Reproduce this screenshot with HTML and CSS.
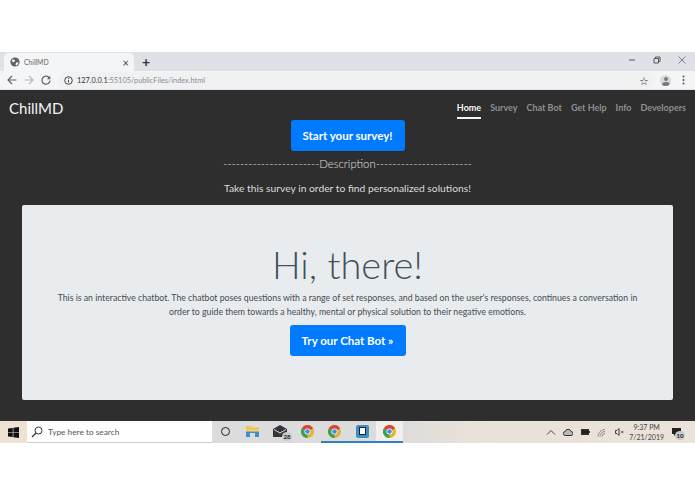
FILE: index.html
```html
<!DOCTYPE html>
<html lang="en">
<head>
<meta charset="utf-8">
<title>ChillMD</title>
<link rel="stylesheet" href="styles.css">
</head>
<body>
<svg class="defs" width="0" height="0" aria-hidden="true">
  <symbol id="chrome" viewBox="0 0 24 24">
    <circle cx="12" cy="12" r="12" fill="#e0b52e"/>
    <path d="M12 12 1.600 6A12 12 0 0 1 22.400 6Z" fill="#db4437"/>
    <path d="M12 12 1.600 6A12 12 0 0 0 12 24Z" fill="#3f9f52"/>
    <circle cx="12" cy="12" r="5.600" fill="#fff"/>
    <circle cx="12" cy="12" r="4.300" fill="#4a8af0"/>
  </symbol>
</svg>
<div class="top-gap"></div>
<div class="tabbar">
  <div class="tab">
    <svg class="globe" width="10" height="10" viewBox="0 0 10 10"><circle cx="5" cy="5" r="4.600" fill="#5f6368"/><path d="M2 2.200 5 3 4.200 5 2.600 5.200ZM6 5.400 8.600 5.600 7 8.600 5.600 8Z" fill="#fff"/></svg>
    <span class="tab-title">ChillMD</span>
    <span class="tab-close">×</span>
  </div>
  <span class="new-tab">+</span>
  <div class="window-controls">
    <svg width="8" height="8" viewBox="0 0 8 8"><path d="M1 4h6" stroke="#555" fill="none"/></svg>
    <svg width="8" height="8" viewBox="0 0 8 8"><path d="M1 2.500h4.500v4.500h-4.500zM2.500 2.500v-1.500h4.500v4.500h-1.500" stroke="#555" fill="none"/></svg>
    <svg width="8" height="8" viewBox="0 0 8 8"><path d="M.5.500l7 7M7.500.500l-7 7" stroke="#666" fill="none" stroke-width=".8"/></svg>
  </div>
</div>
<div class="toolbar">
  <svg class="tool-icon" width="10" height="10" viewBox="0 0 10 10"><path d="M9.500 5h-8M5 1 1 5l4 4" stroke="#5f6368" stroke-width="1.200" fill="none"/></svg>
  <svg class="tool-icon" width="10" height="10" viewBox="0 0 10 10"><path d="M.5 5h8M5 1l4 4-4 4" stroke="#b5b7ba" stroke-width="1.200" fill="none"/></svg>
  <svg class="tool-icon" width="10" height="10" viewBox="0 0 10 10"><path d="M8.500 3.200A4 4 0 1 0 9 5.500" stroke="#5f6368" stroke-width="1.200" fill="none"/><path d="M9.300.8v3.400H5.900z" fill="#5f6368"/></svg>
  <div class="omnibox">
    <svg width="9" height="9" viewBox="0 0 9 9"><circle cx="4.500" cy="4.500" r="3.800" stroke="#444" fill="none"/><path d="M4.500 4v2.500M4.500 2.200v1" stroke="#444"/></svg>
    <span class="url"><span class="url-host">127.0.0.1</span>:55105/publicFiles/index.html</span>
    <span class="star">☆</span>
  </div>
  <span class="avatar"><span class="avatar-head"></span><span class="avatar-body"></span></span>
  <svg width="3" height="10" viewBox="0 0 3 10"><circle cx="1.500" cy="1.500" r="1" fill="#555"/><circle cx="1.500" cy="5" r="1" fill="#555"/><circle cx="1.500" cy="8.500" r="1" fill="#555"/></svg>
</div>
<main class="page">
  <nav class="navbar">
    <a class="brand">ChillMD</a>
    <ul class="nav-links">
      <li class="nav-link active">Home</li>
      <li class="nav-link">Survey</li>
      <li class="nav-link">Chat Bot</li>
      <li class="nav-link">Get Help</li>
      <li class="nav-link">Info</li>
      <li class="nav-link">Developers</li>
    </ul>
  </nav>
  <div class="intro">
    <a class="btn btn-survey">Start your survey!</a>
    <p class="divider">-----------------------Description-----------------------</p>
    <p class="lead">Take this survey in order to find personalized solutions!</p>
  </div>
  <section class="jumbotron">
    <h1 class="hero">Hi, there!</h1>
    <p class="hero-text">This is an interactive chatbot. The chatbot poses questions with a range of set responses, and based on the user's responses, continues a conversation in order to guide them towards a healthy, mental or physical solution to their negative emotions.</p>
    <a class="btn btn-chat">Try our Chat Bot »</a>
  </section>
</main>
<footer class="taskbar">
  <div class="start"><svg width="11" height="11" viewBox="0 0 11 11"><path d="M0 1.600 4.800.9v4.300H0ZM5.400.8 11 0v5.200H5.400ZM0 5.800h4.800v4.300L0 9.400ZM5.400 5.800H11V11l-5.600-.8Z" fill="#111"/></svg></div>
  <div class="search">
    <svg width="12" height="12" viewBox="0 0 12 12"><circle cx="7.500" cy="4.500" r="3.500" stroke="#333" fill="none"/><path d="M5 7 1 11" stroke="#333" stroke-width="1.200"/></svg>
    <span>Type here to search</span>
  </div>
  <div class="task-icons">
    <span class="task-item"><span class="cortana"></span></span>
    <span class="task-item"><svg width="13" height="12" viewBox="0 0 13 12"><path d="M0 1h5l1 1.500h7V5H0Z" fill="#f2c34e"/><path d="M0 5h13v7H9V8H4v4H0Z" fill="#3d8fc9"/><path d="M0 5h13v1.500H0Z" fill="#f6d77c"/></svg></span>
    <span class="task-item"><svg width="15" height="12" viewBox="0 0 15 12"><path d="M0 4 7 0l7 4v8H0Z" fill="#33373b"/><path d="M1 4.500 7 8l6-3.500" stroke="#ddd" fill="none"/></svg><span class="count">28</span></span>
    <span class="task-item"><svg width="13" height="13"><use href="#chrome"/></svg></span>
    <span class="task-item running"><svg width="13" height="13"><use href="#chrome"/></svg></span>
    <span class="task-item running"><span class="vs-icon"><span class="vs-inner"></span></span></span>
    <span class="task-item running current"><svg width="13" height="13"><use href="#chrome"/></svg></span>
  </div>
  <div class="tray">
    <svg width="10" height="6" viewBox="0 0 10 6"><path d="M1 5.500 5 1.500l4 4" stroke="#444" fill="none"/></svg>
    <svg width="10" height="8" viewBox="0 0 10 8"><path d="M2.500 7.500a2 2 0 0 1-.3-4A3 3 0 0 1 8 3.500a2 2 0 0 1 0 4Z" stroke="#333" fill="#bbb"/></svg>
    <svg width="9" height="6" viewBox="0 0 9 6"><rect x=".5" y=".5" width="7" height="5" fill="#222" stroke="#333"/><path d="M8.500 2v2" stroke="#333"/></svg>
    <svg width="10" height="9" viewBox="0 0 10 9"><path d="M1 8.500a7 7 0 0 1 7-7M3 8.500a5 5 0 0 1 5-5M5 8.500a3 3 0 0 1 3-3" stroke="#777" fill="none" stroke-width=".8"/></svg>
    <svg width="10" height="8" viewBox="0 0 10 8"><path d="M.5 2.500h1.500l2-2v7l-2-2H.5Z" stroke="#444" fill="none"/><path d="M6 2.800l2.500 2.500M8.500 2.800 6 5.300" stroke="#444" fill="none" stroke-width=".8"/></svg>
    <div class="clock"><span>9:37 PM</span><span>7/21/2019</span></div>
    <span class="notify"><svg width="9" height="8" viewBox="0 0 9 8"><path d="M0 0h9v6H4L2 8V6H0Z" fill="#222"/></svg><span class="count count-small">10</span></span>
  </div>
</footer>
</body>
</html>
```
FILE: styles.css
```css
* { box-sizing: border-box; }
html, body { margin: 0; padding: 0; }
body { width: 695px; height: 494px; background: #fff; overflow: hidden; font-family: "Lato", "Open Sans", sans-serif; }
.defs { display: block; height: 0; }
.top-gap { height: 52px; }

.tabbar { height: 19px; background: #dee1e6; display: flex; align-items: flex-end; }
.tab { width: 130px; height: 18px; margin-left: 4px; background: #f4f5f6; border-radius: 5px 5px 0 0; display: flex; align-items: center; padding: 0 5px 0 6px; gap: 4px; }
.tab-title { font-size: 6.800px; color: #666; flex: 1; }
.tab-close { font-size: 11px; color: #444; line-height: 1; }
.new-tab { font-size: 14px; line-height: 19px; height: 19px; margin-left: 8px; color: #333; font-weight: 700; align-self: center; }
.window-controls { margin-left: auto; display: flex; gap: 17px; padding: 0 9px 3px 0; align-self: center; }

.toolbar { height: 19px; background: #f4f5f6; display: flex; align-items: center; padding: 0 10px 0 7px; border-bottom: 1px solid #e3e5e8; }
.tool-icon { margin-right: 7px; }
.omnibox { flex: 1; height: 17px; background: #f0f1f3; border-radius: 9px; display: flex; align-items: center; margin: 0 5px 0 0; padding: 0 0 0 6px; gap: 4px; }
.url { font-size: 7.350px; color: #8a8d91; flex: 1; }
.url-host { color: #333; }
.star { font-size: 11px; color: #333; line-height: 1; margin-right: 6px; }
.avatar { width: 11px; height: 11px; border-radius: 50%; background: #d9dadc; margin-right: 11px; display: flex; flex-direction: column; align-items: center; overflow: hidden; }
.avatar-head { width: 4px; height: 4px; border-radius: 50%; background: #77797c; margin-top: 2px; flex: none; }
.avatar-body { width: 8px; height: 6px; border-radius: 50%; background: #77797c; flex: none; margin-top: 1px; }

.page { height: 331px; background: #2e2e2e; overflow: hidden; }
.navbar { height: 30px; display: flex; align-items: flex-start; justify-content: space-between; padding: 8px 9px 0 9px; }
.brand { font-size: 15px; font-weight: 400; color: #f5f5f5; line-height: 20px; }
.nav-links { list-style: none; margin: 0; padding: 3px 0 0; display: flex; gap: 9px; }
.nav-link { font-size: 9px; font-weight: 700; color: #8f8f8f; line-height: 13px; height: 18px; }
.nav-link.active { color: #f5f5f5; border-bottom: 2px solid #f5f5f5; }

.intro { display: flex; flex-direction: column; align-items: center; }
.btn { display: block; background: #007bff; color: #fff; font-weight: 700; font-size: 11.500px; border-radius: 3px; text-align: center; }
.btn-survey { width: 114px; height: 31px; line-height: 31px; }
.divider { margin: 4px 0 0; font-size: 11.300px; line-height: 17px; font-weight: 300; color: #e0e0e0; }
.lead { margin: 7px 0 0; font-size: 10.300px; line-height: 18px; font-weight: 400; color: #dcdcdc; }

.jumbotron { margin: 8px 22px 0; height: 195px; background: #e9ecef; border-radius: 2px; display: flex; flex-direction: column; align-items: center; padding-top: 33px; }
.hero { margin: 0; font-size: 38px; line-height: 53px; font-weight: 300; color: #3f5256; }
.hero-text { margin: 0; width: 600px; font-size: 8.730px; line-height: 14px; color: #444b50; text-align: center; }
.btn-chat { width: 116px; height: 31px; line-height: 31px; margin-top: 6px; }

.taskbar { height: 22px; display: flex; align-items: stretch; background: linear-gradient(90deg, #ede2d3 0, #ede2d3 27px, #dcdcdc 212px, #dcdcdc 400px, #e8e2d8 470px, #e9e3da 100%); }
.start { width: 27px; display: flex; align-items: center; justify-content: center; }
.search { width: 185px; background: #fff; display: flex; align-items: center; gap: 5px; padding-left: 4px; font-size: 8.300px; color: #555; border-bottom: 1px solid #ccc; }
.task-icons { display: flex; }
.task-item { width: 27.300px; display: flex; align-items: center; justify-content: center; position: relative; border-bottom: 2px solid transparent; }
.task-item.running { border-bottom-color: #2f7fc4; }
.task-item.current { background: #f0efed; }
.cortana { width: 9px; height: 9px; border: 1.500px solid #222; border-radius: 50%; }
.count { position: absolute; right: 2px; bottom: 0; width: 10px; height: 9px; border-radius: 50%; background: #c9c9c9; color: #222; font-size: 6px; line-height: 9px; text-align: center; font-weight: 700; }
.vs-icon { width: 13px; height: 13px; background: #3d8fc9; border-radius: 2px; display: flex; align-items: center; justify-content: center; }
.vs-inner { width: 7px; height: 8px; background: #fff; border: 1.500px solid #222; }
.tray { margin-left: auto; display: flex; align-items: center; gap: 7.500px; padding-right: 10px; }
.clock { display: flex; flex-direction: column; align-items: center; font-size: 7px; line-height: 10px; color: #444; margin-left: -3px; }
.notify { width: 18px; height: 18px; display: flex; align-items: center; justify-content: center; position: relative; margin-left: -4.500px; }
.count-small { right: 0; bottom: 1px; }
```
